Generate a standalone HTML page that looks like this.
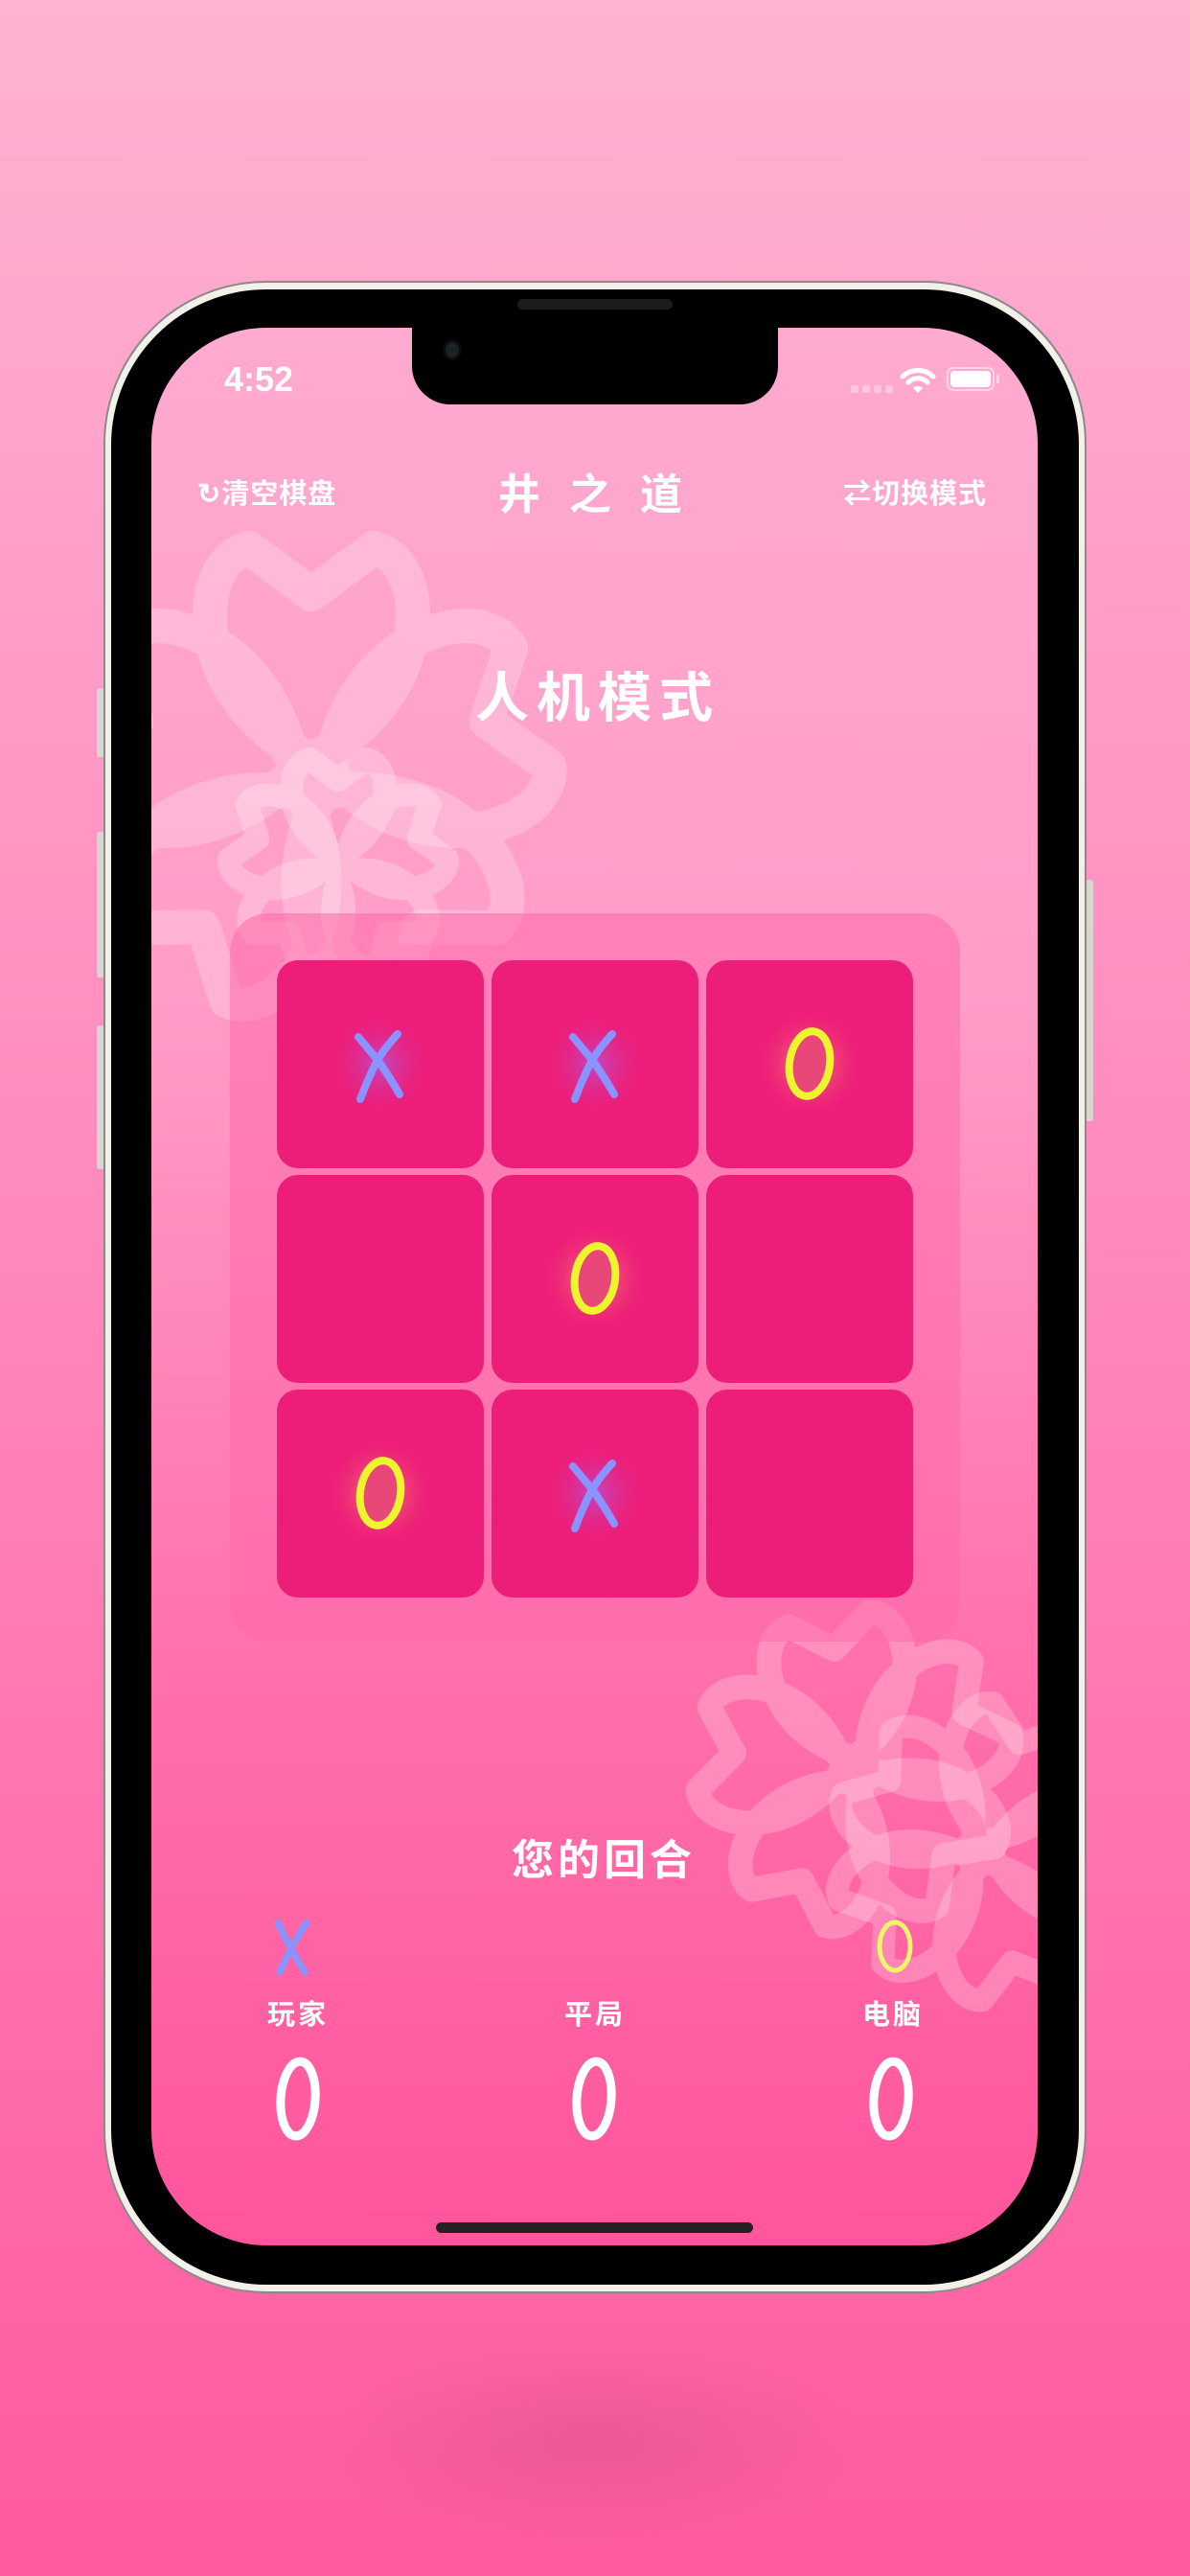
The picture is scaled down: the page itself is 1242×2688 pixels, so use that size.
<!DOCTYPE html>
<html><head><meta charset="utf-8">
<style>
*{margin:0;padding:0;box-sizing:border-box}
body{width:1242px;height:2688px;overflow:hidden;position:relative;
background:linear-gradient(180deg,#ffb2d2 0%,#ff8fc0 40%,#ff5a9f 100%);
font-family:"Liberation Sans","WenQuanYi Zen Hei","Noto Sans CJK SC",sans-serif;}
.shadow{position:absolute;left:320px;top:2440px;width:600px;height:220px;border-radius:50%;
background:radial-gradient(ellipse at center,rgba(120,40,80,.14),rgba(120,40,80,0) 70%)}
.frame{position:absolute;left:108px;top:293px;width:1026px;height:2100px;border-radius:170px;
background:#f2f0e8;border:2px solid #8a8a8a}
.bezel{position:absolute;left:116px;top:302px;width:1010px;height:2082px;border-radius:162px;background:#000}
.btn{position:absolute;background:#d8d6ce;border-radius:3px;width:8px}
.screen{position:absolute;left:158px;top:342px;width:925px;height:2001px;border-radius:120px;overflow:hidden;
background:linear-gradient(180deg,#ffaad0 0%,#ff9cc8 35%,#ff70ac 70%,#ff559c 100%)}
.notch{position:absolute;left:272px;top:-2px;width:382px;height:82px;background:#000;border-radius:0 0 40px 40px}
.abs{position:absolute;color:#fff;white-space:nowrap;font-weight:bold}
.board{position:absolute;left:82px;top:611px;width:762px;height:760px;border-radius:40px;background:rgba(255,105,170,.55)}
.cell{position:absolute;width:216px;height:217px;border-radius:22px;background:#ed1e79;}
.cell svg{position:absolute;left:0;top:0}
</style></head><body>
<div class="shadow"></div>
<div class="btn" style="left:101px;top:718px;height:72px"></div>
<div class="btn" style="left:101px;top:868px;height:152px"></div>
<div class="btn" style="left:101px;top:1070px;height:150px"></div>
<div class="btn" style="left:1133px;top:918px;height:252px"></div>
<div class="frame"></div>
<div class="bezel"></div>
<div style="position:absolute;left:540px;top:312px;width:162px;height:11px;border-radius:6px;background:#1c1c1c"></div>
<div class="screen">
  <svg width="925" height="2001" style="position:absolute;left:0;top:0" fill="none" stroke="#fff" stroke-linejoin="round">
    <defs>
      <path id="pt" d="M0,-8 C-55,-35 -52,-95 -27,-100 L0,-80 L27,-100 C52,-95 55,-35 0,-8 Z"/>
    </defs>
    <g opacity="0.22">
    <g transform="translate(167,470) scale(2.4)" stroke-width="15">
      <use href="#pt" transform="rotate(0)"/><use href="#pt" transform="rotate(72)"/><use href="#pt" transform="rotate(144)"/><use href="#pt" transform="rotate(216)"/><use href="#pt" transform="rotate(288)"/>
    </g>
    </g>
    <g opacity="0.25">
    <g transform="translate(195,560) scale(1.1)" stroke-width="22">
      <use href="#pt" transform="rotate(0)"/><use href="#pt" transform="rotate(72)"/><use href="#pt" transform="rotate(144)"/><use href="#pt" transform="rotate(216)"/><use href="#pt" transform="rotate(288)"/>
    </g>
    </g>
    <g opacity="0.22">
    <g transform="translate(735,1505) scale(1.6) rotate(-10)" stroke-width="16">
      <use href="#pt" transform="rotate(0)"/><use href="#pt" transform="rotate(72)"/><use href="#pt" transform="rotate(144)"/><use href="#pt" transform="rotate(216)"/><use href="#pt" transform="rotate(288)"/>
    </g>
    </g>
    <g opacity="0.22">
    <g transform="translate(865,1590) scale(1.5) rotate(20)" stroke-width="16">
      <use href="#pt" transform="rotate(0)"/><use href="#pt" transform="rotate(72)"/><use href="#pt" transform="rotate(144)"/><use href="#pt" transform="rotate(216)"/><use href="#pt" transform="rotate(288)"/>
    </g>
    </g>
  </svg>
  <div class="notch"><div style="position:absolute;left:32px;top:14px;width:20px;height:22px;border-radius:50%;background:#1a2226;border:3px solid #0b0b0b"></div></div>
  <div class="abs" style="left:76px;top:33px;font-size:36px;font-weight:600">4:52</div>
  <div style="position:absolute;left:730px;top:60px;display:flex;gap:4px">
    <i style="width:8px;height:8px;background:rgba(255,255,255,.35);border-radius:2px"></i><i style="width:8px;height:8px;background:rgba(255,255,255,.35);border-radius:2px"></i><i style="width:8px;height:8px;background:rgba(255,255,255,.35);border-radius:2px"></i><i style="width:8px;height:8px;background:rgba(255,255,255,.35);border-radius:2px"></i>
  </div>
  <svg style="position:absolute;left:781px;top:41px" width="38" height="28" viewBox="0 0 38 28">
    <path d="M3,10 A23,23 0 0 1 35,10" stroke="#fff" stroke-width="5" fill="none" stroke-linecap="round"/>
    <path d="M9,16 A14,14 0 0 1 29,16" stroke="#fff" stroke-width="5" fill="none" stroke-linecap="round"/>
    <path d="M14,22 L19,27 L24,22 A7,7 0 0 0 14,22 Z" fill="#fff"/>
  </svg>
  <div style="position:absolute;left:830px;top:41px;width:50px;height:25px;border:2px solid rgba(255,255,255,.5);border-radius:7px;padding:2px"><div style="width:100%;height:100%;background:#fff;border-radius:4px"></div></div>
  <div style="position:absolute;left:882px;top:49px;width:3px;height:9px;background:rgba(255,255,255,.5);border-radius:0 2px 2px 0"></div>

  <div class="abs" style="left:48px;top:150px;font-size:29px;letter-spacing:1px">↻清空棋盘</div>
  <div class="abs" style="left:362px;top:138px;font-size:44px;letter-spacing:30px">井之道</div>
  <div class="abs" style="left:722px;top:150px;font-size:29px;letter-spacing:1px">⇄切换模式</div>
  <div class="abs" style="left:338px;top:342px;font-size:56px;letter-spacing:8px">人机模式</div>

  <div class="board">
    <div class="cell" style="left:49px;top:49px"><svg width="216" height="217"><defs><radialGradient id="gb"><stop offset="0" stop-color="#9a6cff" stop-opacity=".55"/><stop offset="1" stop-color="#ed1e79" stop-opacity="0"/></radialGradient><radialGradient id="gy"><stop offset="0" stop-color="#ffd070" stop-opacity=".6"/><stop offset="1" stop-color="#ed1e79" stop-opacity="0"/></radialGradient><g id="X"><circle cx="108" cy="108" r="55" fill="url(#gb)"/><path d="M85,80 Q95,92 105,104 Q118,122 128,140" stroke="#8a93ff" stroke-width="8" fill="none" stroke-linecap="round"/><path d="M126,77 Q112,92 104,106 Q94,126 87,145" stroke="#8a93ff" stroke-width="8" fill="none" stroke-linecap="round"/></g><g id="O"><circle cx="108" cy="108" r="58" fill="url(#gy)"/><ellipse cx="108" cy="108" rx="21" ry="34" fill="#e94777" stroke="#eef52f" stroke-width="8" transform="rotate(8 108 108)"/></g></defs><use href="#X"/></svg></div>
    <div class="cell" style="left:273px;top:49px"><svg width="216" height="217"><use href="#X"/></svg></div>
    <div class="cell" style="left:497px;top:49px"><svg width="216" height="217"><use href="#O"/></svg></div>
    <div class="cell" style="left:49px;top:273px"></div>
    <div class="cell" style="left:273px;top:273px"><svg width="216" height="217"><use href="#O"/></svg></div>
    <div class="cell" style="left:497px;top:273px"></div>
    <div class="cell" style="left:49px;top:497px"><svg width="216" height="217"><use href="#O"/></svg></div>
    <div class="cell" style="left:273px;top:497px"><svg width="216" height="217"><use href="#X"/></svg></div>
    <div class="cell" style="left:497px;top:497px"></div>
  </div>

  <div class="abs" style="left:376px;top:1563px;font-size:44px;letter-spacing:4px">您的回合</div>
  <svg style="position:absolute;left:126px;top:1660px" width="44" height="60"><path d="M6,4 Q16,26 34,56" stroke="#8a93ff" stroke-width="7" fill="none" stroke-linecap="round"/><path d="M36,4 Q20,28 8,56" stroke="#8a93ff" stroke-width="7" fill="none" stroke-linecap="round"/></svg>
  <svg style="position:absolute;left:754px;top:1658px" width="44" height="62"><ellipse cx="22" cy="31" rx="16" ry="25" fill="none" stroke="#eef56a" stroke-width="5"/></svg>
  <div class="abs" style="left:153px;top:1737px;width:0"><span style="position:absolute;left:-40px;width:80px;font-size:29px;letter-spacing:3px;text-align:center">玩家</span></div>
  <div class="abs" style="left:463px;top:1737px;width:0"><span style="position:absolute;left:-40px;width:80px;font-size:29px;letter-spacing:3px;text-align:center">平局</span></div>
  <div class="abs" style="left:774px;top:1737px;width:0"><span style="position:absolute;left:-40px;width:80px;font-size:29px;letter-spacing:3px;text-align:center">电脑</span></div>
  <svg style="position:absolute;left:126px;top:1802px" width="56" height="96"><ellipse cx="27" cy="46" rx="18" ry="39" fill="none" stroke="#fff" stroke-width="9" transform="rotate(4 27 46)"/></svg>
  <svg style="position:absolute;left:435px;top:1802px" width="56" height="96"><ellipse cx="27" cy="46" rx="18" ry="39" fill="none" stroke="#fff" stroke-width="9" transform="rotate(4 27 46)"/></svg>
  <svg style="position:absolute;left:745px;top:1802px" width="56" height="96"><ellipse cx="27" cy="46" rx="18" ry="39" fill="none" stroke="#fff" stroke-width="9" transform="rotate(4 27 46)"/></svg>
  <div style="position:absolute;left:297px;top:1977px;width:331px;height:11px;border-radius:6px;background:#222"></div>
</div>
</body></html>
